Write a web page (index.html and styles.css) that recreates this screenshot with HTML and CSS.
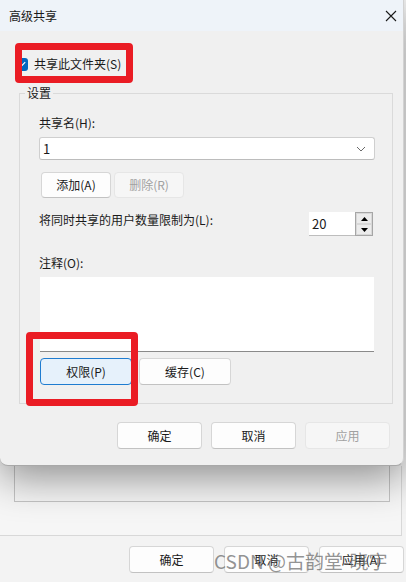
FILE: index.html
```html
<!DOCTYPE html>
<html lang="zh-CN">
<head>
<meta charset="utf-8">
<title>高级共享</title>
<link rel="stylesheet" href="styles.css">
</head>
<body>
<div class="screen">
  <div class="dialog">
    <div class="titlebar">
      <span class="title">高级共享</span>
      <svg class="close" width="12" height="12" viewBox="0 0 12 12"><path d="M1 1L11 11M11 1L1 11" stroke="#1a1a1a" stroke-width="1.1"/></svg>
    </div>
    <div class="dlg-body">
      <div class="check-row">
        <span class="checkbox"><svg width="13" height="13" viewBox="0 0 13 13"><path d="M3 6.8L5.4 9.1L10.2 4.2" fill="none" stroke="#fff" stroke-width="1.2"/></svg></span>
        <span class="check-label">共享此文件夹(S)</span>
        <span class="mark mark-check"></span>
      </div>
      <fieldset class="group">
        <legend class="legend">设置</legend>
        <div class="group-body">
          <div class="label lbl-name">共享名(H):</div>
          <div class="combo">
            <span class="combo-text">1</span>
            <svg class="chev" width="10" height="6" viewBox="0 0 10 6"><path d="M1 1L5 5L9 1" fill="none" stroke="#6a6a6a" stroke-width="1"/></svg>
          </div>
          <div class="btn-row small-row">
            <button class="btn btn-sm">添加(A)</button>
            <button class="btn btn-sm disabled">删除(R)</button>
          </div>
          <div class="limit-row">
            <span class="label">将同时共享的用户数量限制为(L):</span>
            <div class="spinner">
              <span class="spin-value">20</span>
              <div class="spin-btns">
                <span class="spin-btn"><svg width="7" height="4" viewBox="0 0 7 4"><path d="M0 4L3.5 0L7 4Z" fill="#000"/></svg></span>
                <span class="spin-btn"><svg width="7" height="4" viewBox="0 0 7 4"><path d="M0 0L3.5 4L7 0Z" fill="#000"/></svg></span>
              </div>
            </div>
          </div>
          <div class="label lbl-note">注释(O):</div>
          <div class="note"></div>
          <div class="btn-row perm-row">
            <button class="btn btn-md focused">权限(P)</button>
            <button class="btn btn-md">缓存(C)</button>
            <span class="mark mark-perm"></span>
          </div>
        </div>
      </fieldset>
      <div class="btn-row footer">
        <button class="btn btn-lg">确定</button>
        <button class="btn btn-lg">取消</button>
        <button class="btn btn-lg disabled">应用</button>
      </div>
    </div>
  </div>
  <div class="parent">
    <div class="panel">
      <div class="inner-box"></div>
    </div>
    <div class="btn-row parent-footer">
      <button class="btn btn-lg">确定</button>
      <button class="btn btn-lg">取消</button>
      <button class="btn btn-lg">应用(A)</button>
      <span class="watermark">CSDN @古韵堂-晓宇</span>
    </div>
  </div>
</div>
</body>
</html>
```
FILE: styles.css
```css
* { box-sizing: border-box; }
html, body { margin: 0; padding: 0; }
body {
  width: 406px;
  height: 582px;
  overflow: hidden;
  background: #f3f3f3;
  font-family: "Microsoft YaHei UI", "Noto Sans CJK SC", sans-serif;
  font-size: 12px;
  color: #1a1a1a;
}
.screen { width: 406px; height: 582px; position: relative; }

.dialog {
  position: relative;
  z-index: 2;
  width: 404px;
  height: 466px;
  background: #f0f0f0;
  border-right: 1px solid #d2d2d2;
  border-bottom: 1px solid #a8a8a8;
  border-radius: 0 0 8px 8px;
  box-shadow: 0 12px 40px rgba(0, 0, 0, 0.42);
}
.titlebar {
  height: 31px;
  background: #eef3f9;
  display: flex;
  align-items: center;
  justify-content: space-between;
  padding: 0 6px 0 9px;
}
.title { line-height: 16px; }
.close { display: block; }

.dlg-body { padding: 25px 13px 0 0; }

.check-row {
  position: relative;
  display: flex;
  align-items: center;
  height: 16px;
  padding-left: 15px;
}
.checkbox {
  width: 13px;
  height: 13px;
  background: #0067c0;
  border-radius: 3px;
  margin-right: 6px;
  display: flex;
}
.check-label { line-height: 16px; }
.mark {
  position: absolute;
  border: 7px solid #ea1c24;
  border-radius: 4px;
}
.mark-check { left: 15px; top: -13px; width: 118px; height: 40px; }

.group {
  margin: 14px 0 0 19px;
  width: 374px;
  padding: 0;
  border: 1px solid #dadada;
  min-width: 0;
}
.legend {
  margin-left: 5px;
  padding: 0 2px;
  line-height: 14px;
  font-size: 12px;
}
.group-body { padding: 0 17px 18px 19px; }

.label { line-height: 16px; }
.lbl-name { margin-top: 15px; }
.combo {
  margin-top: 6px;
  height: 23px;
  background: #fff;
  border: 1px solid #cfcfcf;
  border-bottom-color: #bcbcbc;
  border-radius: 3px;
  display: flex;
  align-items: center;
  justify-content: space-between;
  padding: 0 8px 0 3px;
}
.combo-text { font-size: 13px; line-height: 16px; }
.chev { display: block; }

.btn-row { display: flex; position: relative; }
.btn {
  font-family: inherit;
  font-size: 12px;
  color: #1a1a1a;
  background: #fdfdfd;
  border: 1px solid #d6d6d6;
  border-bottom-color: #c2c2c2;
  border-radius: 4px;
  padding: 0;
  line-height: 16px;
}
.btn.disabled {
  background: #f6f6f6;
  border-color: #e6e6e6;
  color: #a1a1a1;
}
.small-row { margin-top: 12px; gap: 3px; padding-left: 2px; }
.btn-sm { width: 70px; height: 26px; }

.limit-row {
  margin-top: 14px;
  display: flex;
  justify-content: space-between;
  align-items: flex-start;
  padding-right: 2px;
}
.spinner {
  display: flex;
  height: 24px;
  width: 64px;
}
.spin-value {
  flex: 1;
  background: #fff;
  font-size: 13px;
  line-height: 24px;
  padding-left: 3px;
  border-bottom: 1px solid #bdbdbd;
}
.spin-btns {
  width: 18px;
  display: flex;
  flex-direction: column;
  border: 1px solid #a6a6a6;
  background: #f0f0f0;
}
.spin-btn {
  flex: 1;
  display: flex;
  align-items: center;
  justify-content: center;
  border: 1px solid #d8d8d8;
  background: #ececec;
}
.lbl-note { margin-top: 19px; }
.note {
  margin-top: 6px;
  margin-left: 1px;
  margin-right: 1px;
  height: 75px;
  background: #fff;
  border-bottom: 1px solid #8a8a8a;
}
.perm-row { margin-top: 6px; gap: 7px; padding-left: 1px; }
.btn-md { width: 92px; height: 27px; }
.btn.focused {
  background: #e6f1fb;
  border: 1px solid #1f7cd0;
}
.mark-perm { left: -13px; top: -26px; width: 112px; height: 74px; }

.footer { margin-top: 18px; gap: 9px; justify-content: flex-end; }
.btn-lg { width: 85px; height: 27px; }

.parent { position: relative; z-index: 1; }
.panel {
  width: 402px;
  height: 70px;
  background: #f6f6f6;
  border-right: 1px solid #d8d8d8;
  border-bottom: 1px solid #d8d8d8;
  padding-left: 14px;
}
.inner-box {
  width: 376px;
  height: 36px;
  border: 1px solid #c4c4c4;
  border-top: none;
}
.parent-footer {
  margin-top: 10px;
  gap: 10px;
  padding-left: 129px;
}
.watermark {
  position: absolute;
  left: 214px;
  top: 3px;
  font-family: "Noto Sans CJK SC", sans-serif;
  font-size: 19px;
  line-height: 24px;
  color: rgba(100, 100, 100, 0.7);
  white-space: nowrap;
}
```
